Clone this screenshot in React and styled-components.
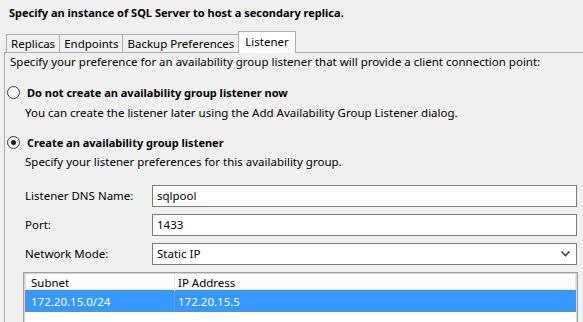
import React from "react";
import styled, { createGlobalStyle } from "styled-components";

const Global = createGlobalStyle`
  html, body { margin: 0; padding: 0; background: #f0f0f0; }
  body { font-family: "Noto Sans", "Open Sans", sans-serif; font-size: 11.5px; color: #000; }
`;

const Page = styled.div`
  width: 583px;
  height: 322px;
  overflow: hidden;
  background: #f0f0f0;
`;

const Title = styled.div`
  height: 32px;
  box-sizing: border-box;
  padding: 5px 0 0 9px;
  font-weight: 700;
  font-size: 11px;
  line-height: 16px;
`;

const TabStrip = styled.div`
  display: flex;
  align-items: flex-end;
  height: 21px;
  padding-left: 7px;
  position: relative;
  z-index: 1;
  margin-bottom: -1px;
`;

const Tab = styled.div`
  box-sizing: border-box;
  height: ${(p) => (p.$active ? 22 : 19)}px;
  padding: 0 ${(p) => (p.$active ? 6 : 4)}px;
  border: 1px solid #adadad;
  border-bottom: ${(p) => (p.$active ? "none" : "1px solid #adadad")};
  margin-left: -1px;
  background: ${(p) => (p.$active ? "#ffffff" : "#f0f0f0")};
  line-height: ${(p) => (p.$active ? 20 : 17)}px;
  white-space: nowrap;
`;

const Panel = styled.div`
  margin-left: 4px;
  border-top: 1px solid #adadad;
  border-left: 1px solid #adadad;
  padding: 1px 0 0 2px;
`;

const Text = styled.div`
  line-height: 16px;
  margin-top: ${(p) => p.$mt || 0}px;
  padding-left: ${(p) => p.$indent || 0}px;
  white-space: nowrap;
`;

const RadioRow = styled.label`
  display: flex;
  align-items: center;
  gap: 7px;
  height: 16px;
  margin-top: ${(p) => p.$mt || 0}px;
  font-weight: 700;
  font-size: 11px;
  white-space: nowrap;
`;

const RadioCircle = styled.span`
  box-sizing: border-box;
  width: 13px;
  height: 13px;
  border-radius: 50%;
  border: 1px solid #333;
  background: #fff;
  display: flex;
  align-items: center;
  justify-content: center;
  flex: none;
  &::after {
    content: "";
    display: ${(p) => (p.$checked ? "block" : "none")};
    width: 5px;
    height: 5px;
    border-radius: 50%;
    background: #1a1a1a;
  }
`;

const Form = styled.div`
  margin-top: 15px;
  padding-left: 18px;
  display: grid;
  grid-template-columns: 127px 425px;
  row-gap: 7px;
  align-items: center;
`;

const Label = styled.div`
  line-height: 16px;
  white-space: nowrap;
`;

const Field = styled.div`
  box-sizing: border-box;
  height: 22px;
  border: 1px solid #7a7a7a;
  background: #fff;
  padding: 0 4px;
  line-height: 20px;
  display: flex;
  align-items: center;
  justify-content: space-between;
`;

const Chevron = styled.svg`
  width: 9px;
  height: 6px;
  margin-right: 2px;
`;

const Table = styled.div`
  margin-top: 7px;
  margin-left: 16px;
  width: 555px;
  height: 60px;
  box-sizing: border-box;
  border: 1px solid #a0a0a0;
  box-shadow: inset 0 0 0 1px #d4d4d4;
  background: #fff;
  padding: 1px;
`;

const Row = styled.div`
  display: grid;
  grid-template-columns: 148px 1fr;
  box-sizing: border-box;
  height: ${(p) => (p.$header ? 16 : 22)}px;
  background: ${(p) => (p.$selected ? "#3399ff" : "#fcfcfc")};
  color: ${(p) => (p.$selected ? "#fff" : "#000")};
  border: 1px solid ${(p) => (p.$selected ? "#5c8fc4" : "#e5e5e5")};
  border-top: ${(p) => (p.$selected ? "1px solid #5c8fc4" : "none")};
`;

const Cell = styled.div`
  padding-left: ${(p) => (p.$first ? 5 : 3)}px;
  line-height: ${(p) => (p.$header ? 17 : 21)}px;
  border-left: ${(p) => (p.$first ? "none" : "1px solid " + p.$divider)};
  white-space: nowrap;
`;

export default function App() {
  return (
    <Page>
      <Global />
      <Title>Specify an instance of SQL Server to host a secondary replica.</Title>
      <TabStrip>
        <Tab>Replicas</Tab>
        <Tab>Endpoints</Tab>
        <Tab>Backup Preferences</Tab>
        <Tab $active>Listener</Tab>
      </TabStrip>
      <Panel>
        <Text $indent={3}>
          Specify your preference for an availability group listener that will provide a client connection point:
        </Text>
        <RadioRow $mt={14}>
          <RadioCircle />
          Do not create an availability group listener now
        </RadioRow>
        <Text $mt={5} $indent={18}>
          You can create the listener later using the Add Availability Group Listener dialog.
        </Text>
        <RadioRow $mt={13}>
          <RadioCircle $checked />
          Create an availability group listener
        </RadioRow>
        <Text $mt={4} $indent={18}>
          Specify your listener preferences for this availability group.
        </Text>
        <Form>
          <Label>Listener DNS Name:</Label>
          <Field>sqlpool</Field>
          <Label>Port:</Label>
          <Field>1433</Field>
          <Label>Network Mode:</Label>
          <Field>
            Static IP
            <Chevron viewBox="0 0 9 6">
              <path d="M0.5 0.5 L4.5 4.5 L8.5 0.5" fill="none" stroke="#444" strokeWidth="1.6" />
            </Chevron>
          </Field>
        </Form>
        <Table>
          <Row $header>
            <Cell $first $header>Subnet</Cell>
            <Cell $header $divider="#e5e5e5">IP Address</Cell>
          </Row>
          <Row $selected>
            <Cell $first>172.20.15.0/24</Cell>
            <Cell $divider="#6a98c8">172.20.15.5</Cell>
          </Row>
        </Table>
      </Panel>
    </Page>
  );
}
